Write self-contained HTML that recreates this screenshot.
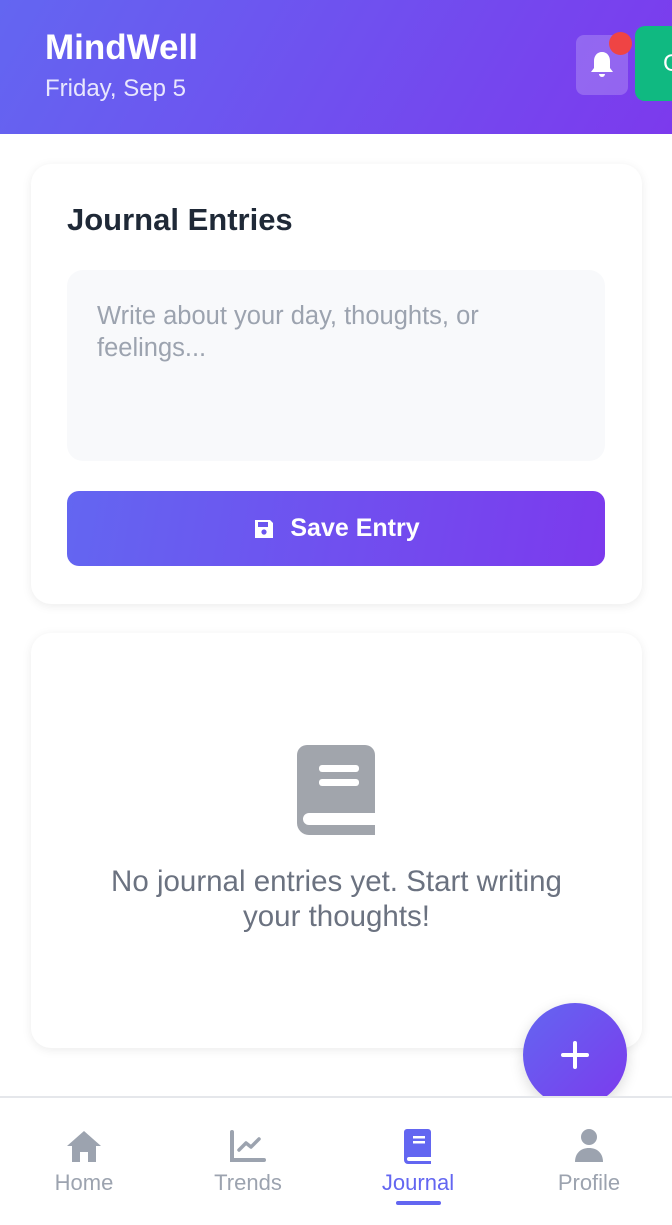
<!DOCTYPE html>
<html><head><meta charset="utf-8"><style>
*{box-sizing:border-box;margin:0;padding:0}
body{width:672px;height:1225px;overflow:hidden;background:#fff;font-family:"Liberation Sans",Roboto,sans-serif;position:relative}
.hdr{position:absolute;left:0;top:0;width:672px;height:134px;background:linear-gradient(120deg,#6366f1,#7c3aed);overflow:hidden}
.t1{position:absolute;left:45px;top:28px;color:#fff;font-size:35px;font-weight:bold}
.t2{position:absolute;left:45px;top:75px;color:rgba(255,255,255,.85);font-size:24px}
.bell{position:absolute;left:576px;top:35px;width:52px;height:60px;border-radius:8px;background:rgba(255,255,255,.2)}
.dot{position:absolute;left:609px;top:32px;width:23px;height:23px;border-radius:50%;background:#ef4444}
.grn{position:absolute;left:635px;top:26px;width:60px;height:75px;border-radius:10px;background:#10b981;color:#fff;font-size:24px;padding:24px 0 0 28px}
.card{position:absolute;left:31px;width:611px;background:#fff;border-radius:20px;box-shadow:0 2px 10px rgba(0,0,0,.08)}
.c1{top:164px;height:440px}
.c2{top:633px;height:415px}
h2{position:absolute;left:36px;top:38px;font-size:31px;color:#1f2937}
.ta{position:absolute;left:36px;top:106px;width:538px;height:191px;background:#f8f9fb;border-radius:16px;padding:30px 100px 30px 30px;color:#9ca3af;font-size:25.5px;line-height:32px}
.btn{position:absolute;left:36px;top:327px;width:538px;height:75px;border-radius:12px;background:linear-gradient(100deg,#6366f1,#7c3aed);color:#fff;font-size:25px;font-weight:bold;display:flex;align-items:center;justify-content:center;gap:14px}
.empty{position:absolute;left:0;top:231px;width:100%;text-align:center;color:#6b7280;font-size:29.5px;line-height:35px}
.clip{position:absolute;left:500px;top:980px;width:172px;height:116px;overflow:hidden}
.fab{position:absolute;left:23px;top:23px;width:104px;height:104px;border-radius:50%;background:linear-gradient(135deg,#6366f1,#7c3aed);box-shadow:0 4px 14px rgba(0,0,0,.15)}
.nav{position:absolute;left:0;top:1096px;width:672px;height:129px;background:#fff;border-top:2px solid #e5e7eb;z-index:5}
.it{position:absolute;top:0;width:168px;text-align:center;color:#9ca3af;font-size:22px}
.it svg{position:absolute;top:30px;left:64px}
.it span{position:absolute;top:72px;left:0;width:100%}
</style></head><body>
<div class="hdr">
<div class="t1">MindWell</div><div class="t2">Friday, Sep 5</div>
<div class="bell"><svg width="52" height="60" viewBox="0 0 52 60"><path d="M26 17c-5 0-8 4-8 9v7l-3 4h22l-3-4v-7c0-5-3-9-8-9z" fill="#fff"/><path d="M23 39h6a3 3 0 0 1-6 0z" fill="#fff"/></svg></div>
<div class="dot"></div>
<div class="grn">G</div>
</div>
<div class="card c1"><h2>Journal Entries</h2>
<div class="ta">Write about your day, thoughts, or feelings...</div>
<div class="btn"><svg width="24" height="24" viewBox="0 0 24 24"><path d="M3 3h15l3 3v15H3z" fill="#fff"/><rect x="6" y="5" width="10" height="5" fill="#6a55ef"/><circle cx="12" cy="15" r="2.6" fill="#6a55ef"/></svg>Save Entry</div>
</div>
<div class="card c2">
<svg style="position:absolute;left:266px;top:112px" width="78" height="90" viewBox="0 0 78 90"><path d="M10 0h58a10 10 0 0 1 10 10v58H12a6 6 0 0 0 0 12h66v10H12A12 12 0 0 1 0 78V10A10 10 0 0 1 10 0z" fill="#a1a5ac"/><rect x="22" y="20" width="40" height="7" rx="3" fill="#fff"/><rect x="22" y="34" width="40" height="7" rx="3" fill="#fff"/></svg>
<div class="empty">No journal entries yet. Start writing<br>your thoughts!</div>
</div>
<div class="clip"><div class="fab"><svg width="104" height="104" viewBox="0 0 104 104"><path d="M52 40v24M40 52h24" stroke="#fff" stroke-width="4" stroke-linecap="round"/></svg></div></div>
<div class="nav">
<div class="it" style="left:0"><svg width="40" height="36" viewBox="0 0 40 36"><path d="M20 3L3 18h5v16h8v-10h8v10h8V18h5z" fill="#9ca3af"/></svg><span>Home</span></div>
<div class="it" style="left:164px"><svg width="40" height="36" viewBox="0 0 40 36"><path d="M4 4v28h32" stroke="#9ca3af" stroke-width="4" fill="none" stroke-linecap="round"/><path d="M11 22l7-7 5 4 8-8" stroke="#9ca3af" stroke-width="3.5" fill="none" stroke-linecap="round" stroke-linejoin="round"/></svg><span>Trends</span></div>
<div class="it" style="left:334px;color:#6366f1"><svg width="40" height="36" viewBox="0 0 40 36"><path d="M9 1h21a3 3 0 0 1 3 3v25H11a2 2 0 0 0 0 4h22v3H10a4 4 0 0 1-4-4V4a3 3 0 0 1 3-3z" fill="#6366f1"/><rect x="15" y="8" width="12" height="2.5" fill="#fff"/><rect x="15" y="13" width="12" height="2.5" fill="#fff"/></svg><span>Journal</span><div style="position:absolute;left:62px;top:103px;width:45px;height:4px;border-radius:2px;background:#6366f1"></div></div>
<div class="it" style="left:505px"><svg width="40" height="36" viewBox="0 0 40 36"><circle cx="20" cy="9" r="8" fill="#9ca3af"/><path d="M6 34c0-9 6-14 14-14s14 5 14 14z" fill="#9ca3af"/></svg><span>Profile</span></div>
</div>
</body></html>
